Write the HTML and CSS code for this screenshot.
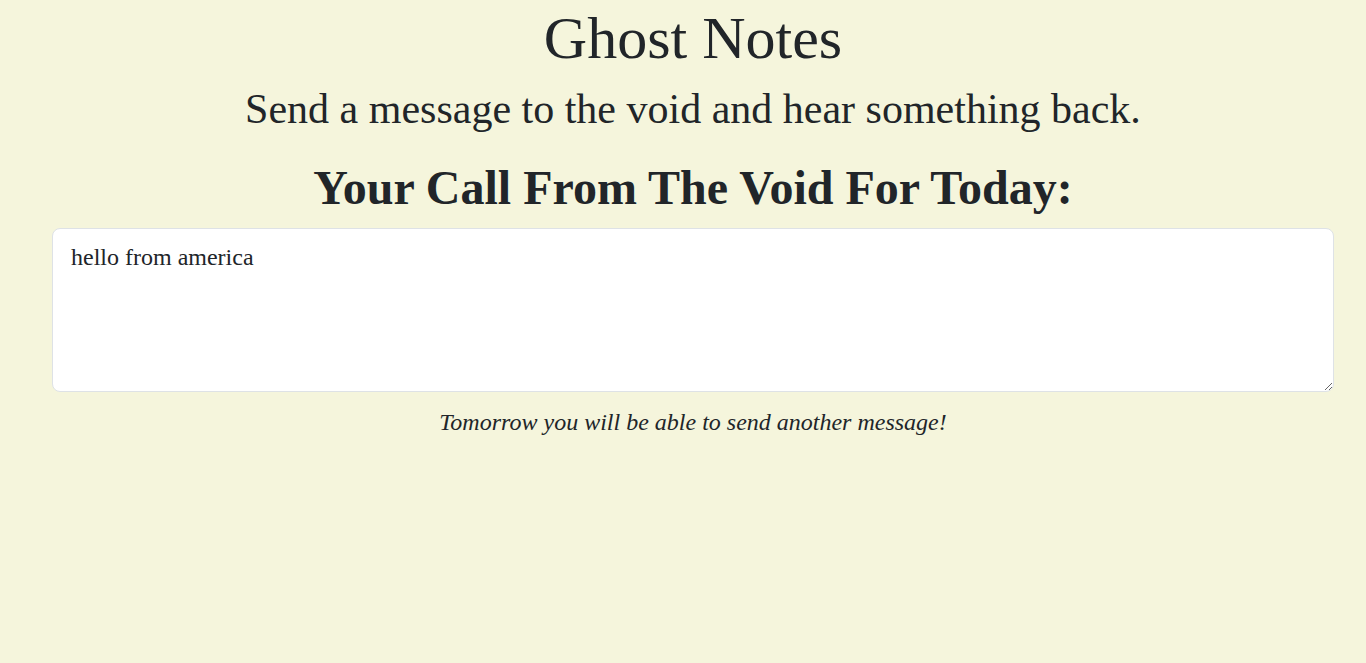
FILE: index.html
```html
<!DOCTYPE html>
<html lang="en">
<head>
<meta charset="utf-8">
<title>Ghost Notes</title>
<link rel="stylesheet" href="styles.css">
</head>
<body>
<main class="page">
  <h1 class="title">Ghost Notes</h1>
  <p class="subtitle">Send a message to the void and hear something back.</p>
  <h2 class="heading">Your Call From The Void For Today:</h2>
  <textarea class="message" readonly>hello from america</textarea>
  <p class="note">Tomorrow you will be able to send another message!</p>
</main>
</body>
</html>
```
FILE: styles.css
```css
html, body {
  margin: 0;
  padding: 0;
  background: #f5f5dc;
}
body {
  font-family: "Liberation Serif", "Times New Roman", serif;
  color: #212529;
}
.page {
  padding-left: 20px;
  display: flex;
  flex-direction: column;
  align-items: center;
  text-align: center;
}
.title {
  font-size: 60px;
  font-weight: 400;
  line-height: 1.2;
  margin: 2px 0 0;
}
.subtitle {
  font-size: 42px;
  line-height: 1.2;
  margin: 10px 0 0;
}
.heading {
  font-size: 48px;
  font-weight: 700;
  line-height: 1.2;
  margin: 25px 0 0;
}
.message {
  box-sizing: border-box;
  width: calc(100% - 64px);
  height: 164px;
  margin: 11px 32px 0;
  padding: 10px 18px;
  font-family: "Liberation Serif", "Times New Roman", serif;
  font-size: 24px;
  line-height: 1.5;
  color: #212529;
  background: #fff;
  border: 1px solid #dee2e6;
  border-radius: 8px;
  text-align: left;
  outline: none;
}
.note {
  font-size: 24px;
  font-style: italic;
  margin: 17px 0 0;
}
```
